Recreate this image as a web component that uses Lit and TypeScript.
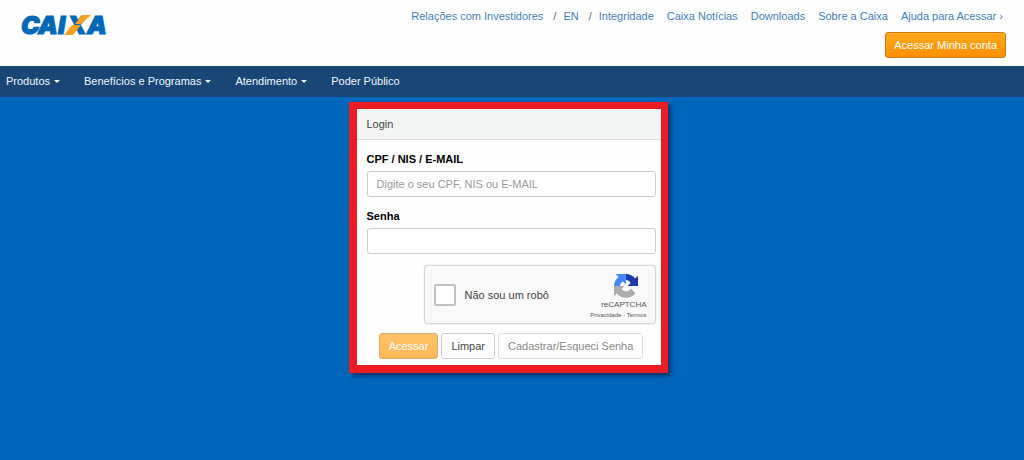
import { LitElement, html, css, svg, nothing } from "lit";
import { customElement, property } from "lit/decorators.js";

interface NavItem {
  label: string;
  menu: boolean;
}

const NAV: NavItem[] = [
  { label: "Produtos", menu: true },
  { label: "Benefícios e Programas", menu: true },
  { label: "Atendimento", menu: true },
  { label: "Poder Público", menu: false },
];

@customElement("caixa-logo")
class CaixaLogo extends LitElement {
  static styles = css`
    :host {
      display: block;
    }
    .logo {
      display: block;
      overflow: visible;
    }
    .word {
      font: italic 900 25px Inter, "Liberation Sans", sans-serif;
      fill: #0068b6;
      stroke: #0068b6;
      stroke-width: 1px;
    }
  `;

  render() {
    return html`<svg class="logo" width="88" height="20" viewBox="0 0 88 20" role="img" aria-label="CAIXA">
      ${svg`
        <text class="word" y="18"><tspan x="0">C</tspan><tspan x="17">A</tspan><tspan x="37">I</tspan><tspan x="46">X</tspan><tspan x="66">A</tspan></text>
        <path d="M54 8 L61 -1 H70 L60 8 Z M51 9 H60 L52 19 H43 Z" fill="#f9a01b" />
      `}
    </svg>`;
  }
}

@customElement("site-header")
class SiteHeader extends LitElement {
  static styles = css`
    :host {
      display: block;
      background: #fefefe;
    }
    .bar {
      display: flex;
      justify-content: space-between;
      align-items: flex-start;
      padding: 8px 18px 8px 21px;
    }
    .brand {
      padding-top: 8px;
    }
    .side {
      display: flex;
      flex-direction: column;
      align-items: flex-end;
      gap: 8px;
    }
    .links {
      display: flex;
      gap: 13px;
      padding-right: 3px;
      line-height: 16px;
    }
    .group {
      display: flex;
      gap: 7px;
    }
    .sep {
      color: #666;
      padding-left: 3px;
    }
    a {
      color: #4380b8;
      text-decoration: none;
    }
    .account {
      height: 26px;
      padding: 0 8px;
      font: inherit;
      color: #fff;
      background: linear-gradient(#ffa71c, #ff9000);
      border: 1px solid #c27c1c;
      border-radius: 3px;
    }
  `;

  render() {
    return html`<header class="bar">
      <a class="brand" href="#"><caixa-logo></caixa-logo></a>
      <div class="side">
        <nav class="links">
          <span class="group">
            <a href="#">Relações com Investidores</a>
            <span class="sep">/</span><a href="#">EN</a>
            <span class="sep">/</span><a href="#">Integridade</a>
          </span>
          <a href="#">Caixa Notícias</a>
          <a href="#">Downloads</a>
          <a href="#">Sobre a Caixa</a>
          <a href="#">Ajuda para Acessar ›</a>
        </nav>
        <button class="account" type="button">Acessar Minha conta</button>
      </div>
    </header>`;
  }
}

@customElement("main-nav")
class MainNav extends LitElement {
  @property({ attribute: false }) items: NavItem[] = [];

  static styles = css`
    :host {
      display: block;
      background: #1a4676;
    }
    .bar {
      display: flex;
      gap: 24px;
      padding: 0 6px;
      line-height: 31px;
    }
    .item {
      display: flex;
      align-items: center;
      gap: 4px;
      color: #f2f6fa;
      text-decoration: none;
    }
    .caret {
      border: 3px solid transparent;
      border-top-color: currentColor;
      border-bottom: 0;
    }
  `;

  render() {
    return html`<nav class="bar">
      ${this.items.map(
        (item) => html`<a class="item" href="#"
          >${item.label}${item.menu ? html`<span class="caret"></span>` : nothing}</a
        >`
      )}
    </nav>`;
  }
}

@customElement("captcha-box")
class CaptchaBox extends LitElement {
  static styles = css`
    :host {
      display: block;
    }
    .box {
      display: flex;
      align-items: center;
      box-sizing: border-box;
      width: 232px;
      height: 59px;
      padding: 0 8px 0 9px;
      background: #f9f9f9;
      border: 1px solid #d6d6d6;
      border-radius: 3px;
      box-shadow: 0 0 2px #ddd;
    }
    .check {
      display: flex;
      align-items: center;
      gap: 9px;
      flex: 1;
      color: #444;
    }
    .tick {
      appearance: none;
      box-sizing: border-box;
      width: 22px;
      height: 22px;
      margin: 0;
      background: #fff;
      border: 2px solid #c1c1c1;
      border-radius: 2px;
    }
    .brand {
      display: flex;
      flex-direction: column;
      align-items: flex-end;
      padding-top: 4px;
      color: #555;
    }
    .mark {
      display: block;
      margin: 0 9px 1px 0;
    }
    .name {
      font-size: 8px;
      line-height: 12px;
    }
    .terms {
      font-size: 6px;
      line-height: 8px;
    }
    a {
      color: inherit;
      text-decoration: none;
    }
  `;

  render() {
    return html`<div class="box">
      <label class="check"><input class="tick" type="checkbox" />Não sou um robô</label>
      <div class="brand">
        <svg class="mark" width="24" height="24" viewBox="0 0 64 64" aria-hidden="true">
          <path d="M64 31.95v-27.4l-7.6 7.6A32 32 0 0 0 31.9.1v16.2c3.4 0 6 .8 8.1 2.2a16 16 0 0 1 4.3 5.4l-8 8z" fill="#1c3aa9" />
          <path d="M31.9.1H4.6l7.5 7.6A32 32 0 0 0 0 32.1h16.3c0-3.4.8-6 2.2-8.1a16 16 0 0 1 5.3-4.3l8 8z" fill="#4285f4" />
          <path d="M0 32v27.4l7.6-7.6a32 32 0 0 0 49.8-.7L44.9 38.6a16 16 0 0 1-4.7 5.3c-2.1 1.6-5 2.9-9 2.9a16 16 0 0 1-11.5-6.8l8-8z" fill="#ababab" />
        </svg>
        <span class="name">reCAPTCHA</span>
        <span class="terms"><a href="#">Privacidade</a> - <a href="#">Termos</a></span>
      </div>
    </div>`;
  }
}

@customElement("login-panel")
class LoginPanel extends LitElement {
  static styles = css`
    :host {
      display: block;
      width: 304px;
      background: #fefefe;
      border: 8px solid #ed1c24;
      border-top-width: 7px;
      border-right-width: 7px;
      box-shadow: 3px 3px 4px rgba(10, 30, 70, 0.65);
    }
    .title {
      margin: 0;
      padding: 0 10px;
      font-size: 11px;
      font-weight: 400;
      line-height: 30px;
      color: #444;
      background: #f3f5f4;
      border-bottom: 1px solid #ddd;
    }
    .form {
      display: flex;
      flex-direction: column;
      padding: 11px 5px 6px 10px;
    }
    .label {
      font-weight: 700;
      line-height: 16px;
      color: #000;
    }
    .field {
      box-sizing: border-box;
      width: 100%;
      height: 26px;
      margin: 4px 0 11px;
      padding: 0 9px;
      font: inherit;
      color: #444;
      background: #fff;
      border: 1px solid #ccc;
      border-radius: 3px;
    }
    .field::placeholder {
      color: #999;
      opacity: 1;
    }
    .captcha {
      align-self: flex-end;
    }
    .actions {
      display: flex;
      justify-content: center;
      gap: 3px;
      padding-top: 9px;
    }
    .btn {
      height: 26px;
      padding: 0 9px;
      font: inherit;
      color: #444;
      background: #fff;
      border: 1px solid #ccc;
      border-radius: 3px;
    }
    .primary {
      color: #fff;
      background: linear-gradient(#ffc266, #ffb85a);
      border-color: #dcae6c;
    }
    .muted {
      color: #888;
      border-color: #ddd;
    }
  `;

  render() {
    return html`<section>
      <h1 class="title">Login</h1>
      <form class="form" @submit=${(e: Event) => e.preventDefault()}>
        <label class="label" for="user">CPF / NIS / E-MAIL</label>
        <input class="field" id="user" type="text" placeholder="Digite o seu CPF, NIS ou E-MAIL" />
        <label class="label" for="pass">Senha</label>
        <input class="field" id="pass" type="password" />
        <captcha-box class="captcha"></captcha-box>
        <div class="actions">
          <button class="btn primary" type="submit">Acessar</button>
          <button class="btn" type="reset">Limpar</button>
          <button class="btn muted" type="button">Cadastrar/Esqueci Senha</button>
        </div>
      </form>
    </section>`;
  }
}

@customElement("app-root")
class AppRoot extends LitElement {
  static styles = css`
    :host {
      display: flex;
      flex-direction: column;
      min-height: 100vh;
      font: 11px "Liberation Sans", Arial, sans-serif;
      background: #0067bc;
    }
    .content {
      display: flex;
      justify-content: center;
      padding: 5px 8px 5px 0;
    }
  `;

  render() {
    return html`
      <site-header></site-header>
      <main-nav .items=${NAV}></main-nav>
      <main class="content"><login-panel></login-panel></main>
    `;
  }
}
